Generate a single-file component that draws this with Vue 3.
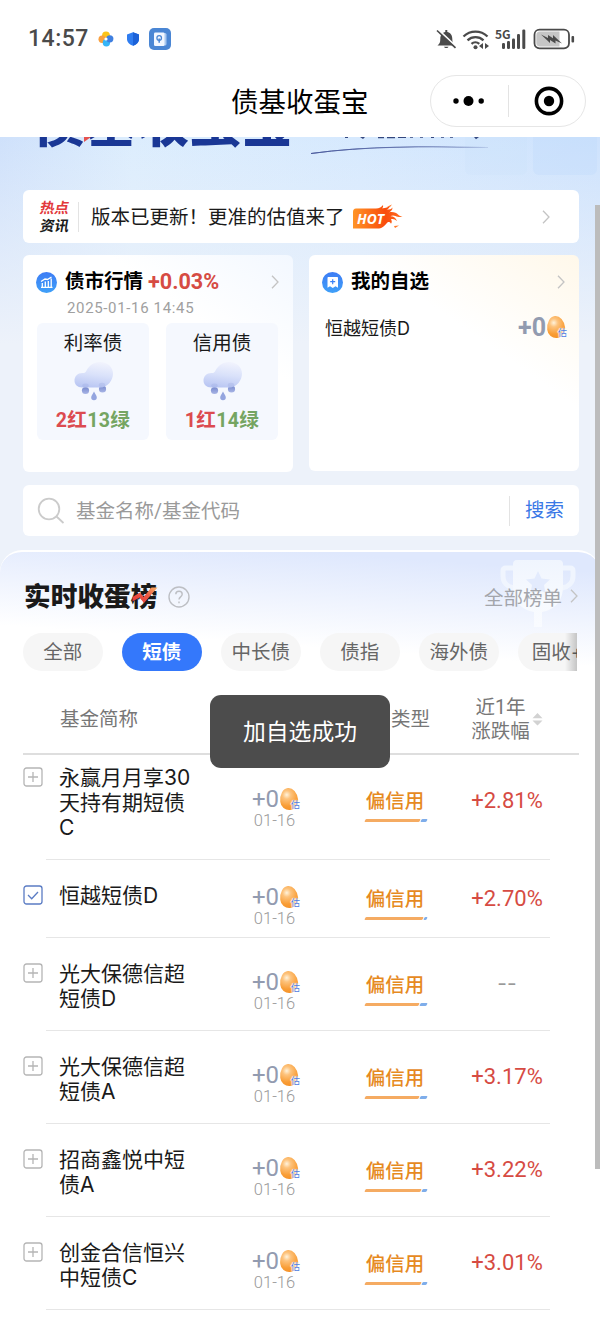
<template>
  <div class="page">
    <header class="status">
      <span class="clock">14:57</span>
      <svg class="ico-flower" width="16" height="16" viewBox="0 0 16 16">
        <circle cx="8" cy="4.3" r="3.9" fill="#fcc419" />
        <circle cx="4.2" cy="8.2" r="3.7" fill="#f9a03f" />
        <circle cx="8.4" cy="11.8" r="3.7" fill="#35b5f7" />
        <circle cx="11.8" cy="7.8" r="3.6" fill="#3f7fe0" />
        <circle cx="8" cy="8" r="1.6" fill="#fff" />
      </svg>
      <svg class="ico-shield" width="14" height="14" viewBox="0 0 14 14">
        <path d="M7 .3 13 2.4V7c0 3.3-2.6 5.6-6 6.8C3.6 12.6 1 10.3 1 7V2.4z" fill="#2f7df0" />
        <path d="M7 .3 13 2.4V7c0 3.3-2.6 5.6-6 6.8z" fill="#1c62d8" />
      </svg>
      <svg class="ico-app" width="22" height="22" viewBox="0 0 22 22">
        <rect width="22" height="22" rx="5" fill="#4a86d4" />
        <rect x="8" y="5" width="9.5" height="12.5" rx="1.5" fill="#a9c8ef" />
        <rect x="5" y="4.5" width="10.5" height="13.5" rx="1.2" fill="#f2f7ff" />
        <circle cx="10.2" cy="10" r="2.3" fill="none" stroke="#4a86d4" stroke-width="1.3" />
        <path d="M10.2 10.5v4.2" stroke="#4a86d4" stroke-width="1.5" />
      </svg>
      <svg class="ico-right" width="144" height="28" viewBox="0 0 144 28">
        <g fill="#4a4a4a">
          <path d="M2.5 20.5c2-1.5 2.8-3 2.8-6.5 0-4 2.3-6.4 5-6.9V5h2v2.1c2.8.5 5 2.900 5 6.900 0 3.500.8 5 2.700 6.500z" />
          <path d="M9 21.800h4.500c-.4 1.600-4.100 1.600-4.500 0z" />
        </g>
        <path d="M3 4.500 21 21.500" stroke="#fff" stroke-width="1.800" />
        <path d="M2 5.500 20.500 22.800" stroke="#4a4a4a" stroke-width="1.700" />
        <g fill="none" stroke="#4a4a4a" stroke-width="2.300">
          <path d="M28.500 11.500c6.800-6.400 17.200-6.400 24 0" />
          <path d="M32.500 15.300c4.500-4.200 11.500-4.200 16 0" />
          <path d="M36.500 18.800c2.200-2 5.500-2 7.800 0" />
        </g>
        <circle cx="40.500" cy="22.200" r="2" fill="#4a4a4a" />
        <path d="M48 18v6l-4-3zM50 18v6l4-3z" fill="#4a4a4a" />
        <g fill="#4a4a4a">
          <rect x="67" y="18" width="3" height="6" rx="1.200" />
          <rect x="72" y="16" width="3" height="8" rx="1.200" />
          <rect x="77" y="13.500" width="3" height="10.500" rx="1.200" />
          <rect x="82" y="9" width="3" height="15" rx="1.200" />
          <rect x="87.300" y="4.500" width="3" height="19.500" rx="1.200" />
        </g>
        <text x="60" y="13.500" class="net">5G</text>
        <rect x="99.500" y="4.700" width="34.500" height="18.600" rx="5" fill="#fff" stroke="#4a4a4a" stroke-width="1.800" />
        <path d="M105 6.500h19.500v15H105c-2.500 0-3.700-1.500-3.700-3.500v-8c0-2 1.200-3.500 3.700-3.500z" fill="#c6c6c6" />
        <path d="M106 9.500l7 3.500v-3l5 3.200V10l9 8.500-6.500-3v3L115 15v3z" fill="#4a4a4a" />
        <rect x="136.500" y="11" width="2.600" height="6.500" rx="1" fill="#4a4a4a" />
      </svg>
    </header>

    <nav class="navbar">
      <h1>债基收蛋宝</h1>
      <div class="capsule">
        <svg width="34" height="12" viewBox="0 0 34 12">
          <circle cx="5" cy="6" r="2.700" /><circle cx="17.500" cy="6" r="5" /><circle cx="30.200" cy="6" r="2.700" />
        </svg>
        <i></i>
        <svg width="30" height="30" viewBox="0 0 30 30">
          <circle cx="15" cy="15" r="12.600" fill="none" stroke="#000" stroke-width="3.600" />
          <circle cx="15" cy="15" r="5.200" />
        </svg>
      </div>
    </nav>

    <main class="hero">
      <div class="brand">
        <span class="brand-name">债基收蛋宝</span>
        <svg class="brand-line" width="300" height="50" viewBox="0 0 300 50">
          <rect x="165" y="-10" width="62" height="48" rx="6" fill="#c6dffb" opacity=".2" />
          <rect x="233" y="-10" width="64" height="48" rx="6" fill="#bcd6fa" opacity=".28" />
          <path d="M11 16.500C65 9 125 9.500 188 10.500 125 9 65 9 11 16.500z" fill="#49599c" stroke="url(#fade)" stroke-width=".9" />
          <path d="M45 0h3v1h-3zM60 0h5l-2 2zM78 0h6v1.200h-6zM87 0h8v1.200h-8zM98 0h8v1h-8zM110 0h3v.7h-3zM120 0h3v.7h-3zM131 0h3v1h-3zM141 0h3v.7h-3zM150 0h3v.7h-3zM174 0h5l-3 2.300z" fill="#33477f" />
          <defs>
            <linearGradient id="fade"><stop offset="0" stop-color="#49599c" /><stop offset="1" stop-color="#49599c" stop-opacity=".1" /></linearGradient>
          </defs>
        </svg>
        <i class="brand-red"></i>
      </div>

      <section class="news card">
        <div class="news-tag"><em>热点</em><em>资讯</em></div>
        <span class="news-text">版本已更新！更准的估值来了</span>
        <svg class="hot" width="52" height="26" viewBox="0 0 52 26">
          <defs>
            <linearGradient id="fire"><stop offset="0" stop-color="#ff9427" /><stop offset=".65" stop-color="#f94c0c" /><stop offset="1" stop-color="#ff6d20" /></linearGradient>
          </defs>
          <path d="M4 4.500h20c3-.2 6-1.500 7-3.500.3 2 0 2.500-1 3.200 3 .3 6-1 8-2.200-.5 2-2 3-3.500 3.800 3 0 5-1 6-2.300 0 2.500-1.500 4-4 5 4-1 8 0 9.500 2 1.500 1.500 3 2 4.500 2-2 1-5 .5-7-.5-2-1-4-.7-5 .3 3 0 5.500 1.500 6.500 5-2-2-4-2.600-6-2 1 1.500 1 3 0 4.500-.5-1.500-1.600-2-3-1.800C33 21 31 24 27 24.500H1V8c0-2 1-3.500 3-3.500z" fill="url(#fire)" />
          <path d="M35 2.800 40 .5 38 3zM42 22l5-.5-4 2.500z" fill="#ff7a2a" />
          <text x="5" y="19.600" class="hot-text" textLength="27" lengthAdjust="spacingAndGlyphs">HOT</text>
        </svg>
        <svg class="chev" width="8" height="14" viewBox="0 0 8 14"><path d="M1 .7 7 7 1 13.300" /></svg>
      </section>

      <div class="duo">
        <section class="card market">
          <div class="card-head">
            <svg width="21" height="21" viewBox="0 0 21 21">
              <circle cx="10.500" cy="10.500" r="10.500" fill="url(#blue)" />
              <defs><linearGradient id="blue" x2="0" y2="1"><stop stop-color="#3d7cf5" /><stop offset="1" stop-color="#3fa0f8" /></linearGradient></defs>
              <path d="M5 15.300h11.500M6.300 15v-4M9.300 15V9.500M12.300 15V9M15.200 15V6.500M5 9.500l4-2.500 2.500.5L15.500 5" fill="none" stroke="#fff" stroke-width="1.300" />
            </svg>
            <b>债市行情</b>
            <b class="rise">+0.03%</b>
            <svg class="chev" width="8" height="14" viewBox="0 0 8 14"><path d="M1 .7 7 7 1 13.300" /></svg>
          </div>
          <p class="stamp">2025-01-16 14:45</p>
          <div class="weather">
            <div v-for="w in weather" :key="w.name" class="weather-box">
              <span>{{ w.name }}</span>
              <svg width="42" height="42" viewBox="0 0 42 42">
                <defs>
                  <linearGradient id="cloud" x1=".6" y1="0" x2=".4" y2="1"><stop stop-color="#f1f3fd" /><stop offset=".5" stop-color="#d9e1fa" /><stop offset="1" stop-color="#b9c6f3" /></linearGradient>
                  <linearGradient id="drop" x2="0" y2="1"><stop stop-color="#7688cd" /><stop offset="1" stop-color="#a9b6e6" /></linearGradient>
                </defs>
                <circle cx="13.500" cy="31.500" r="3.600" fill="url(#drop)" />
                <circle cx="30.500" cy="30" r="3.600" fill="url(#drop)" />
                <path d="M10 28.500C5.500 28.500 2.500 25.500 2.500 21.500S5.500 14 10.500 14C13 14 13.500 13.500 14.500 11.500 17 7 21.500 3 28 3c7.500 0 13 5 13 11.500S36 28.500 28 28.500z" fill="url(#cloud)" />
                <ellipse cx="13.500" cy="26.500" rx="3.200" ry="2" fill="#8e9edb" opacity=".25" />
                <ellipse cx="30" cy="26" rx="3.200" ry="2.300" fill="#8e9edb" opacity=".25" />
                <path d="M22 32.500c1.500 3 2.800 4.200 2.800 6a2.800 2.800 0 0 1-5.600 0c0-1.800 1.300-3 2.800-6z" fill="#94a5df" />
              </svg>
              <strong><span class="red">{{ w.up }}红</span><span class="green">{{ w.down }}绿</span></strong>
            </div>
          </div>
        </section>

        <section class="card mine">
          <div class="card-head">
            <svg width="21" height="21" viewBox="0 0 21 21">
              <circle cx="10.500" cy="10.500" r="10.500" fill="url(#blue)" />
              <path d="M6.500 5h8.500c.6 0 1 .4 1 1v9.800l-2.500-1.500-2.700 1.700-2.800-1.700-2.500 1.500V6c0-.6.400-1 1-1z" fill="#fff" />
              <path d="M10.700 7.200v5M8.200 9.700h5" stroke="#3b82f6" stroke-width="1.200" />
            </svg>
            <b>我的自选</b>
            <svg class="chev" width="8" height="14" viewBox="0 0 8 14"><path d="M1 .7 7 7 1 13.300" /></svg>
          </div>
          <div class="mine-row">
            <span>恒越短债D</span>
            <span class="eggs bold">+0<i class="egg"></i><small>估</small></span>
          </div>
        </section>
      </div>

      <section class="card search">
        <svg width="28" height="28" viewBox="0 0 28 28"><circle cx="12" cy="12" r="10.300" /><path d="M19.500 19.500 26.500 26" /></svg>
        <span class="placeholder">基金名称/基金代码</span>
        <span class="search-btn">搜索</span>
      </section>
    </main>

    <section class="panel">
      <div class="panel-head">
        <h2>实时收蛋榜
          <svg width="26" height="18" viewBox="0 0 26 18">
            <defs><linearGradient id="tick" y1="1" x2="1" y2="0"><stop stop-color="#e5333a" /><stop offset=".55" stop-color="#ee5a44" /><stop offset="1" stop-color="#fbb568" /></linearGradient></defs>
            <path d="M.5 11 8 6.500l3.500 4.500L19.500 1.500h6L12 17 7.500 11.500 .5 15.500z" fill="url(#tick)" />
          </svg>
        </h2>
        <svg class="help" width="22" height="22" viewBox="0 0 22 22">
          <circle cx="11" cy="11" r="10" /><path d="M7.800 8.300c0-4 6.400-4 6.400 0 0 2.500-3.200 2.700-3.200 5.300M11 15.500v1.700" />
        </svg>
        <div class="all-rank">
          <svg class="trophy" width="76" height="68" viewBox="0 0 76 68">
            <path d="M14 9H6c-2 0-3 1-3 3v5c0 7 5 11 11 12M62 9h8c2 0 3 1 3 3v5c0 7-5 11-11 12" fill="none" stroke="#f0f5fe" stroke-width="5" />
            <path d="M17 1h42c3 0 4 2 4 4v22c0 16-9 24-21 26v15h-8V53C22 51 13 43 13 27V5c0-2 1-4 4-4z" fill="url(#cup)" />
            <path d="M38 12l3.500 7.500 8.500 1-6 5.500 1.500 8-7.500-4-7.500 4 1.500-8-6-5.500 8.500-1z" fill="#e3ebfd" />
            <defs><linearGradient id="cup" x2="0" y2="1"><stop stop-color="#f0f5fe" /><stop offset=".6" stop-color="#f7fafe" /><stop offset="1" stop-color="#f9fbff" /></linearGradient></defs>
          </svg>
          <span>全部榜单</span>
          <svg class="chev" width="8" height="14" viewBox="0 0 8 14"><path d="M1 .7 7 7 1 13.300" /></svg>
        </div>
      </div>

      <div class="tabs">
        <span v-for="t in tabs" :key="t" :class="{ active: t === current }" @click="current = t">{{ t }}</span>
      </div>

      <div class="thead">
        <span class="th-name">基金简称</span>
        <span class="th-type">类型</span>
        <span class="th-rate">近1年<br />涨跌幅</span>
        <svg width="11" height="13" viewBox="0 0 11 13"><path d="M5.500 0 10.500 5.300H.5zM.5 7.500h10l-5 5z" fill="#d2d2d2" /></svg>
      </div>

      <div class="rows">
        <div v-for="f in funds" :key="f.name" class="row">
          <svg class="box" :class="{ on: f.picked }" width="20" height="20" viewBox="0 0 20 20">
            <rect x="1" y="1" width="18" height="18" rx="2.500" />
            <path v-if="f.picked" d="M5 10l3.700 3.700L15 7" />
            <path v-else d="M5 10h10M10 5v10" />
          </svg>
          <div class="name">{{ f.name }}</div>
          <div class="value">
            <span class="eggs">+0<i class="egg"></i><small>估</small></span>
            <span class="date">01-16</span>
          </div>
          <div class="type">
            <span>偏信用</span>
            <div class="bar"><i :style="{ width: f.credit + 'px' }"></i><i></i></div>
          </div>
          <div class="rate" :class="{ none: f.rate === '--' }">{{ f.rate }}</div>
        </div>
      </div>
    </section>

    <div class="toast">加自选成功</div>
    <div class="scrollbar"></div>
  </div>
</template>

<script setup>
import { ref } from 'vue';

const weather = [
  { name: '利率债', up: 2, down: 13 },
  { name: '信用债', up: 1, down: 14 },
];

const tabs = ['全部', '短债', '中长债', '债指', '海外债', '固收+'];
const current = ref('短债');

const funds = [
  { name: '永赢月月享30天持有期短债C', rate: '+2.81%', credit: 55 },
  { name: '恒越短债D', rate: '+2.70%', credit: 58, picked: true },
  { name: '光大保德信超短债D', rate: '--', credit: 54 },
  { name: '光大保德信超短债A', rate: '+3.17%', credit: 54 },
  { name: '招商鑫悦中短债A', rate: '+3.22%', credit: 56 },
  { name: '创金合信恒兴中短债C', rate: '+3.01%', credit: 56 },
];
</script>

<style>
body {
  background: #fff;
  overflow: hidden;
}
</style>

<style scoped>
.page {
  position: relative;
  width: 600px;
  height: 1326px;
  overflow: hidden;
  font-family: Roboto, "Noto Sans CJK SC", sans-serif;
  color: #1a1a1a;
  background: #fff;
}

.page svg {
  display: block;
  flex: none;
}

i,
em {
  font-style: normal;
}

/* 状态栏 */
.status {
  height: 76px;
  padding: 1px 21px 0 28px;
  display: flex;
  align-items: center;
  box-sizing: border-box;
}

.clock {
  width: 70px;
  font: 500 23px/28px Roboto, sans-serif;
  letter-spacing: 0.5px;
  color: #4a4a4a;
}

.ico-shield {
  margin-left: 12px;
}

.ico-app {
  margin-left: 9px;
}

.ico-right {
  margin-left: auto;
}

.net {
  font: 700 12px "Noto Sans CJK SC", sans-serif;
  fill: #4a4a4a;
}

.navbar {
  height: 61px;
  display: flex;
}

h1 {
  margin: 0 0 0 231px;
  width: 199px;
  font-size: 27.5px;
  font-weight: 400;
  line-height: 54px;
  color: #000;
}

.capsule {
  width: 156px;
  height: 52px;
  margin-top: -1px;
  border: 1px solid #e6e6e6;
  border-radius: 27px;
  box-sizing: border-box;
  display: flex;
  align-items: center;
  padding-left: 20px;
}

.capsule i {
  width: 1px;
  height: 32px;
  margin: 0 25px 0 23px;
  background: #e3e3e3;
}

/* 顶部区域 */
.hero {
  height: 414px;
  overflow: hidden;
  padding: 0 21px 0 23px;
  box-sizing: border-box;
  background: linear-gradient(180deg, rgba(237, 242, 251, 0) 0%, #edf2fa 50%),
    linear-gradient(90deg, #cfe1fb 0%, #dcedfd 22%, #d6e9fe 60%, #cde2fd 100%);
}

.brand {
  position: relative;
  height: 53px;
}

.brand-name {
  position: absolute;
  left: 10px;
  top: -42px;
  font-size: 52px;
  font-weight: 900;
  line-height: 60px;
  color: #1a3795;
}

.brand-line {
  position: absolute;
  left: 277px;
  top: 0;
}

.brand-red {
  position: absolute;
  left: 61px;
  top: 0;
  border-top: 5px solid #e5524e;
  border-right: 7px solid transparent;
}

.card {
  background: #fff;
  border-radius: 6px;
}

.chev {
  fill: none;
  stroke: #c4c4c4;
  stroke-width: 1.3;
}

.news {
  height: 53px;
  display: flex;
  align-items: center;
}

.news-tag {
  width: 56px;
  height: 30px;
  box-sizing: border-box;
  padding: 2px 0 0 17px;
  border-right: 1px solid #e3e3e3;
  display: flex;
  flex-direction: column;
  justify-content: center;
}

.news-tag em {
  font-size: 14.5px;
  font-weight: 700;
  line-height: 18px;
  transform: skewX(-10deg);
  white-space: nowrap;
}

.news-tag em:first-child {
  color: #e2393c;
}

.news-text {
  margin: -2px 0 0 12px;
  font-size: 19.5px;
}

.hot {
  margin-left: 7px;
}

.hot-text {
  font: italic 700 15px "Open Sans", sans-serif;
  fill: #fff;
}

.news .chev {
  margin: 0 29px 0 auto;
}

.duo {
  display: flex;
  gap: 16px;
  margin-top: 12px;
}

.duo .card {
  width: 270px;
  height: 217px;
  box-sizing: border-box;
}

.market {
  background: linear-gradient(215deg, #f3f8ff 0%, #fff 32%);
}

.duo .mine {
  height: 216px;
  background: linear-gradient(215deg, #fff8ea 0%, #fff 38%);
}

.card-head {
  height: 30px;
  margin-top: 12px;
  padding: 0 14px 0 13px;
  display: flex;
  align-items: center;
}

.card-head b {
  margin-left: 8px;
  font-size: 19.5px;
  line-height: 30px;
  color: #000;
}

.card-head .rise {
  margin-left: 5px;
  font-size: 21.6px;
  color: #d64b43;
}

.card-head .chev {
  margin-left: auto;
}

.stamp {
  margin: 1px 0 0 44px;
  font: 400 15px/20px Roboto, sans-serif;
  letter-spacing: 0.65px;
  color: #a0a0a0;
}

.weather {
  display: flex;
  gap: 17px;
  margin: 5px 0 0 14px;
}

.weather-box {
  width: 112px;
  height: 117px;
  border-radius: 6px;
  background: #f5f8fe;
  display: flex;
  flex-direction: column;
  align-items: center;
}

.weather-box > span {
  margin-top: 8px;
  font-size: 19.5px;
  line-height: 26px;
}

.weather-box svg {
  margin-top: 2px;
}

.weather-box strong {
  font-size: 19.6px;
  line-height: 24px;
  margin-top: 8px;
  letter-spacing: 0.3px;
}

.red {
  color: #dc4b50;
}

.green {
  color: #75a562;
}

.mine-row {
  display: flex;
  justify-content: space-between;
  align-items: center;
  height: 28px;
  margin: 16px 12px 0 16px;
  font-family: Inter, "Noto Sans CJK SC", sans-serif;
  font-size: 18px;
}

.eggs {
  display: flex;
  align-items: center;
  height: 24px;
  font-family: Roboto, sans-serif;
  font-size: 24px;
  color: #929bb0;
}

.eggs.bold {
  font-size: 25px;
  font-weight: 700;
}

.egg {
  width: 18px;
  height: 22px;
  margin-left: 1px;
  border-radius: 50% 50% 50% 50% / 58% 58% 42% 42%;
  background: radial-gradient(circle at 40% 30%, #fff3dc 0, #fdc37d 22%, #f99d35 60%, #f18a20 100%);
  transform: rotate(-6deg);
}

.eggs small {
  align-self: flex-end;
  margin: 0 0 1px -7px;
  font: 400 9px/11px "Noto Sans CJK SC", sans-serif;
  color: #4d7de0;
  text-shadow: 0 0 1px #fff, 0 0 2px #fff, 1px 0 1px #fff, -1px 0 1px #fff;
  z-index: 1;
}

.search {
  height: 51px;
  margin-top: 13px;
  padding-left: 14px;
  display: flex;
  align-items: center;
}

.search svg {
  fill: none;
  stroke: #cbcbcb;
  stroke-width: 1.8;
}

.placeholder {
  flex: 1;
  margin: -2px 0 0 11px;
  font-size: 19.5px;
  color: #9a9a9a;
}

.search-btn {
  width: 70px;
  box-sizing: border-box;
  padding-left: 15px;
  border-left: 1px solid #e3e3e3;
  font-size: 19.5px;
  line-height: 30px;
  color: #3a78e6;
}

/* 榜单 */
.panel {
  position: relative;
  margin-top: -1px;
  height: 776px;
  border-top: 2px solid #fff;
  border-radius: 22px 22px 0 0;
  box-sizing: border-box;
  background: linear-gradient(184deg, #dfe8fd 20px, rgba(255, 255, 255, 0) 115px), #fff;
  box-shadow: 0 -22px 0 0 #edf2fa;
  clip-path: inset(0);
}

.panel-head {
  height: 81px;
  padding: 8px 22px 0 24px;
  box-sizing: border-box;
  display: flex;
  align-items: center;
}

h2 {
  position: relative;
  margin: 1px 0 0;
  width: 134px;
  font-size: 26.7px;
  font-weight: 900;
  line-height: 36px;
  white-space: nowrap;
}

h2 svg {
  position: absolute;
  right: 0;
  top: 7px;
}

.help {
  margin-left: 10px;
  fill: none;
  stroke: #bdbfc4;
  stroke-width: 1.4;
}

.all-rank {
  position: relative;
  margin: -1px 0 0 auto;
  display: flex;
  align-items: center;
  gap: 8px;
  font-size: 19.5px;
  color: #a3a5ab;
}

.all-rank span,
.all-rank .chev {
  position: relative;
}

.trophy {
  position: absolute;
  right: 2px;
  top: -23px;
}

.tabs {
  display: flex;
  gap: 19.5px;
  width: 554px;
  margin-left: 23px;
  overflow: hidden;
  position: relative;
}

.tabs span {
  flex: none;
  width: 79.5px;
  height: 37.5px;
  border-radius: 19px;
  background: #f6f6f6;
  font-family: Inter, "Noto Sans CJK SC", sans-serif;
  font-size: 19.5px;
  line-height: 38px;
  text-align: center;
  color: #666;
}

.tabs .active {
  background: #3478fb;
  color: #fff;
  font-weight: 700;
}

.tabs::after {
  content: "";
  position: absolute;
  right: 0;
  top: 0;
  width: 12px;
  height: 100%;
  background: linear-gradient(90deg, rgba(0, 0, 0, 0), rgba(0, 0, 0, 0.2));
}

.thead {
  height: 84px;
  margin: 0 21px 0 23px;
  padding-top: 16px;
  box-sizing: border-box;
  border-bottom: 2px solid #dedede;
  display: flex;
  align-items: center;
  font-size: 19.5px;
  line-height: 23.5px;
  color: #777;
}

.th-name {
  margin-left: 37px;
  width: 331px;
}

.th-type {
  width: 80px;
}

.th-rate {
  width: 59px;
  text-align: center;
  white-space: nowrap;
}

.thead svg {
  margin-left: 2px;
}

.rows {
  margin-top: -13px;
}

.row {
  display: flex;
  align-items: center;
  margin: 0 50px 0 46px;
  min-height: 78px;
  box-sizing: border-box;
  border-bottom: 1px solid #e6e6e6;
}

.box {
  align-self: flex-start;
  margin: 25px 0 0 -23px;
  fill: none;
  stroke: #b5b5b5;
  stroke-width: 1.3;
}

.box.on {
  stroke: #5b7cc4;
}

.name {
  align-self: flex-start;
  width: 134px;
  margin-left: 16px;
  margin-right: 7px;
  padding: 23px 0 19px;
  font-family: Inter, "Noto Sans CJK SC", sans-serif;
  font-size: 21px;
  line-height: 25px;
  word-break: break-all;
}

.row:nth-child(2) .name {
  padding-bottom: 0;
}

.value {
  width: 149px;
  padding-top: 17px;
  display: flex;
  flex-direction: column;
  align-items: center;
}

.value .eggs {
  padding-left: 3px;
}

.date {
  font-size: 16.5px;
  font-weight: 300;
  line-height: 20px;
  color: #999;
}

.type {
  width: 92px;
  padding-top: 10px;
  display: flex;
  flex-direction: column;
  align-items: center;
  font-size: 19.5px;
  line-height: 28px;
  color: #e68a1f;
}

.type span {
  font-weight: 500;
}

.bar {
  display: flex;
  gap: 1px;
  width: 62px;
  height: 3px;
  margin: 3px 0 0 2px;
}

.bar i {
  background: #f5ab62;
  border-radius: 1px;
  transform: skewX(-25deg);
}

.bar i + i {
  flex: 1;
  background: #7eadea;
}

.rate {
  width: 86px;
  margin-left: 23px;
  text-align: center;
  font-size: 22px;
  color: #d64b43;
}

.rate.none {
  font-family: Inter, sans-serif;
  font-size: 21px;
  color: #999;
}

.toast {
  position: absolute;
  left: 210px;
  top: 695px;
  width: 180px;
  height: 73px;
  border-radius: 11px;
  background: #4c4c4c;
  color: #fff;
  font-size: 22.8px;
  line-height: 75px;
  text-align: center;
}

.scrollbar {
  position: absolute;
  right: 0;
  top: 205px;
  width: 5px;
  height: 964px;
  background: #bcbcbc;
}
</style>
